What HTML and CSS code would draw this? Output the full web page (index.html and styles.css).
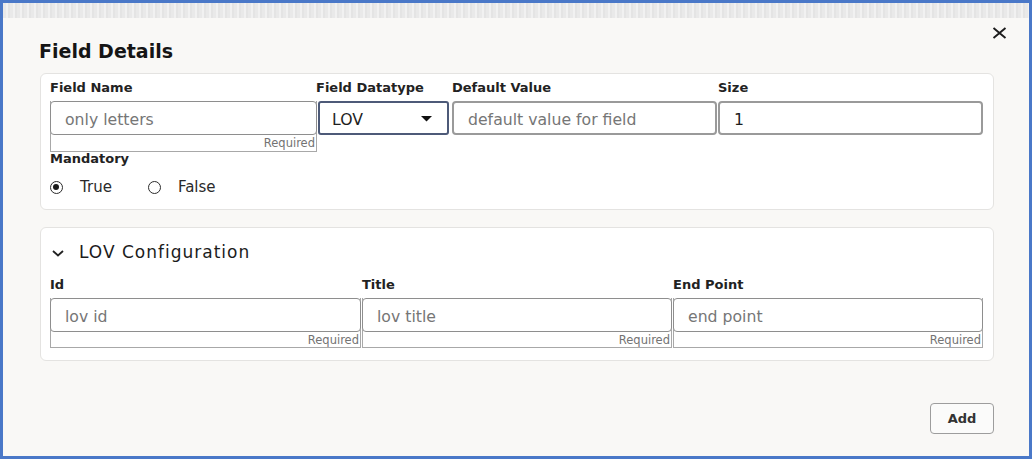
FILE: index.html
```html
<!DOCTYPE html>
<html>
<head>
<meta charset="utf-8">
<link rel="stylesheet" href="styles.css">
</head>
<body>
<div class="frame">
  <div class="strip"></div>
  <div class="dialog">
    <button class="close" aria-label="Close">
      <svg width="15" height="12" viewBox="0 0 15 12"><path d="M1.5 1 L13.5 11 M13.5 1 L1.5 11" stroke="#1c1c1c" stroke-width="1.9" fill="none"/></svg>
    </button>
    <h1 class="title">Field Details</h1>

    <section class="card card-top">
      <div class="grid4">
        <div class="field">
          <div class="label">Field Name</div>
          <div class="wrap">
            <div class="input placeholder">only letters</div>
            <div class="helper">Required</div>
          </div>
        </div>
        <div class="field">
          <div class="label">Field Datatype</div>
          <div class="input select">
            <span>LOV</span>
            <svg class="caret" width="11" height="6" viewBox="0 0 11 6"><path d="M0 0 L11 0 L5.5 5.5 Z" fill="#111"/></svg>
          </div>
        </div>
        <div class="field">
          <div class="label">Default Value</div>
          <div class="input plain placeholder">default value for field</div>
        </div>
        <div class="field">
          <div class="label">Size</div>
          <div class="input plain value">1</div>
        </div>
      </div>
      <div class="label mand">Mandatory</div>
      <div class="radios">
        <label class="radio"><span class="dot checked"></span>True</label>
        <label class="radio"><span class="dot"></span>False</label>
      </div>
    </section>

    <section class="card card-lov">
      <div class="lov-head">
        <svg class="chev" width="12" height="7" viewBox="0 0 12 7"><path d="M1 1 L6 5.5 L11 1" stroke="#222" stroke-width="1.8" fill="none"/></svg>
        <span>LOV Configuration</span>
      </div>
      <div class="grid3">
        <div class="field">
          <div class="label">Id</div>
          <div class="wrap">
            <div class="input placeholder">lov id</div>
            <div class="helper">Required</div>
          </div>
        </div>
        <div class="field">
          <div class="label">Title</div>
          <div class="wrap">
            <div class="input placeholder">lov title</div>
            <div class="helper">Required</div>
          </div>
        </div>
        <div class="field">
          <div class="label">End Point</div>
          <div class="wrap">
            <div class="input placeholder">end point</div>
            <div class="helper">Required</div>
          </div>
        </div>
      </div>
    </section>

    <div class="actions">
      <button class="btn">Add</button>
    </div>
  </div>
</div>
</body>
</html>
```

FILE: styles.css
```css
* { box-sizing: border-box; }
html, body { margin: 0; padding: 0; background: #ffffff; }
body { font-family: "DejaVu Sans", "Noto Sans", sans-serif; color: #1e1e1e; }

.frame {
  width: 1032px;
  height: 459px;
  border: 3px solid #4a78c8;
  background: #f9f8f6;
  display: flex;
  flex-direction: column;
  position: relative;
}
.strip {
  height: 15px;
  flex: none;
  background: repeating-linear-gradient(90deg, #e9e9e9 0 3px, #f1f1f1 3px 5px, #e4e4e4 5px 7px);
}
.dialog {
  flex: 1;
  padding: 21px 35px 0 37px;
  position: relative;
}
.close {
  position: absolute;
  top: 9px;
  left: 989px;
  border: 0;
  background: transparent;
  padding: 0;
  width: 15px;
  height: 12px;
  display: block;
}
.close svg { display: block; }
.title {
  margin: 0 0 10px -1px;
  font-size: 19px;
  line-height: 24px;
  font-weight: 700;
  color: #151515;
}

.card {
  background: #ffffff;
  border: 1px solid #e4e3e1;
  border-radius: 6px;
  padding: 6px 9px 11px 9px;
}
.card-lov { margin-top: 17px; padding-top: 13px; padding-bottom: 12px; }

.label {
  font-size: 13px;
  line-height: 16px;
  font-weight: 700;
  color: #222;
  margin-bottom: 5px;
  white-space: nowrap;
}
.grid4 {
  display: grid;
  grid-template-columns: 268px 134px 266px 1fr;
}
.grid3 {
  display: grid;
  grid-template-columns: 312px 311px 1fr;
  margin-top: 14px;
}
.field { min-width: 0; }
.grid4 .field:nth-child(2) .label { margin-left: -2px; }

.wrap {
  border: 1px solid #a8a8a8;
  border-top: 0;
  margin-right: 1px;
}
.wrap .input { margin: 0 -1px; }
.input {
  height: 34px;
  border: 1.5px solid #8e8e8e;
  border-radius: 4px;
  background: #fff;
  font-size: 15.7px;
  line-height: 31px;
  padding: 2px 14px 0 14px;
  white-space: nowrap;
  overflow: hidden;
}
.plain { margin-right: 1px; border-width: 2px; border-color: #9a9a9a; line-height: 30px; }
.placeholder { color: #767676; }
.value { color: #1e1e1e; }
.select {
  margin-right: 3px;
  border: 2px solid #4d5a78;
  border-radius: 3px;
  color: #1e1e1e;
  padding: 0 15px 0 12px;
  display: flex;
  align-items: center;
  justify-content: space-between;
  line-height: 30px;
}
.select span { padding-top: 3px; }
.caret { display: block; margin-top: 1px; }
.helper {
  height: 16px;
  font-size: 11.5px;
  line-height: 17px;
  color: #737373;
  text-align: right;
  padding-right: 1px;
}
.grid3 .wrap { height: 50px; }

.mand { line-height: 14px; margin: 0; }
.radios {
  display: flex;
  align-items: center;
  height: 22px;
  margin-top: 10px;
  gap: 36px;
}
.radio {
  display: flex;
  align-items: center;
  font-size: 15px;
  color: #2a2a2a;
  gap: 17px;
}
.dot {
  width: 13px;
  height: 13px;
  border: 1.5px solid #2b2b2b;
  border-radius: 50%;
  display: inline-block;
  position: relative;
}
.dot.checked::after {
  content: "";
  position: absolute;
  left: 2px;
  top: 2px;
  width: 6px;
  height: 6px;
  border-radius: 50%;
  background: #1a1a1a;
}

.lov-head {
  display: flex;
  align-items: center;
  height: 22px;
  font-size: 17px;
  letter-spacing: 1px;
  color: #1c1c1c;
  gap: 15px;
  padding-left: 2px;
}
.chev { display: block; margin-top: 2px; }

.actions {
  display: flex;
  justify-content: flex-end;
  margin-top: 42px;
}
.btn {
  width: 64px;
  height: 31px;
  border: 1px solid #9d9d9d;
  border-radius: 4px;
  background: #fbfbfa;
  font-family: "DejaVu Sans", "Noto Sans", sans-serif;
  font-size: 13px;
  font-weight: 700;
  color: #333;
  padding: 0;
}
```
